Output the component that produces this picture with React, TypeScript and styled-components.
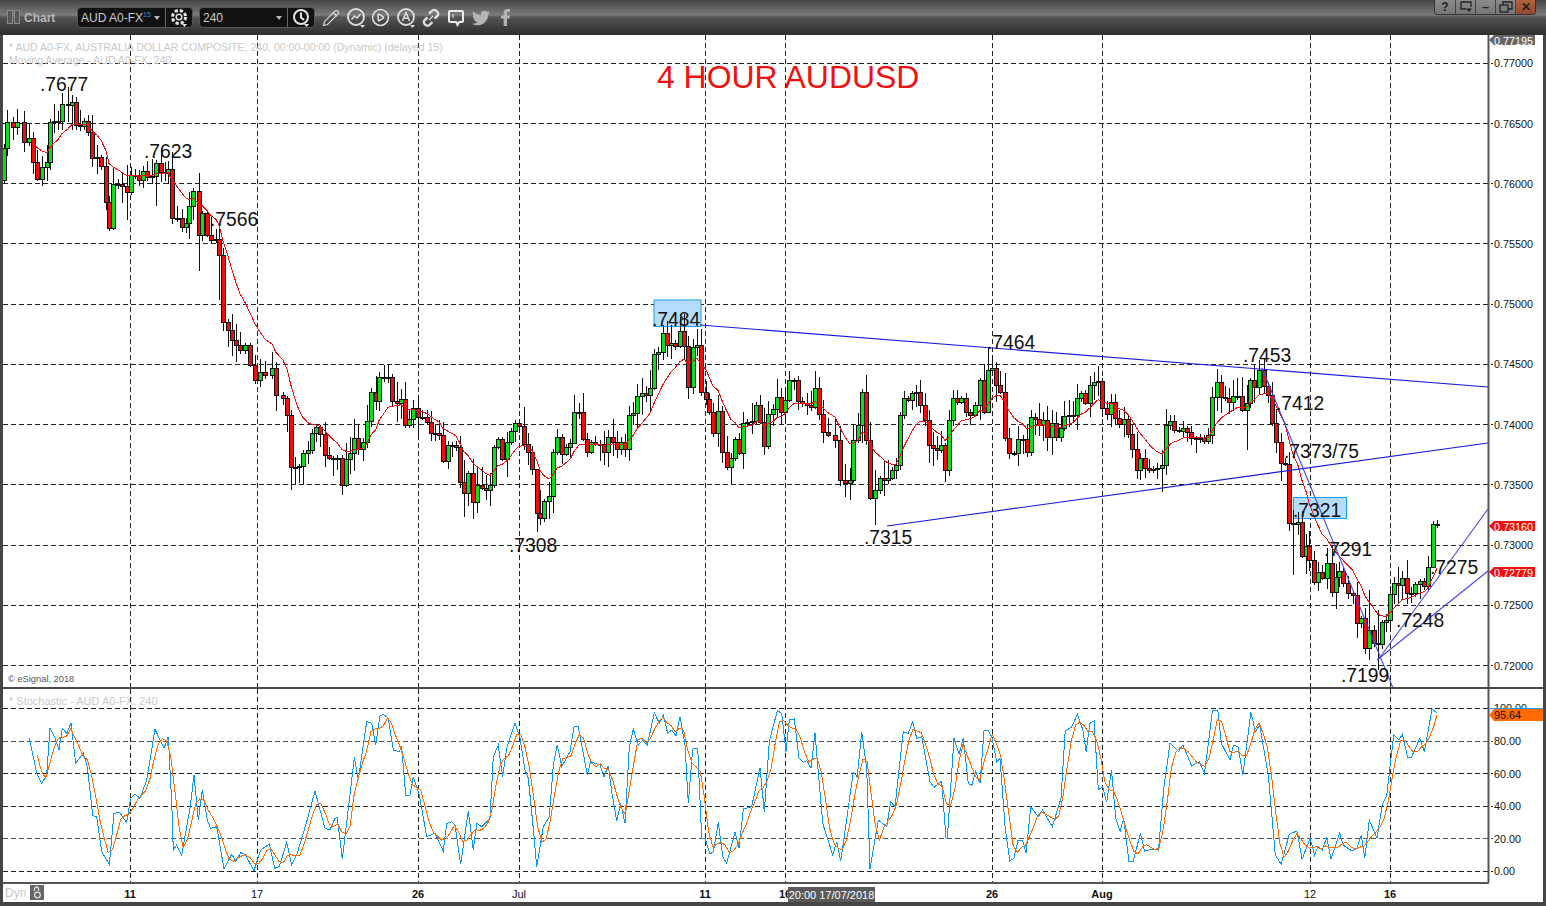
import React from "react";
import styled, { createGlobalStyle } from "styled-components";
import { Pencil, CirclePlay } from "lucide-react";
import { FaTwitter, FaFacebookF } from "react-icons/fa";

const Global = createGlobalStyle`
  html, body { margin: 0; padding: 0; background: #444; overflow: hidden; }
  * { box-sizing: border-box; }
`;

const Frame = styled.div`
  width: 1546px; height: 906px; display: flex; flex-direction: column;
  background: #454545; font-family: "Liberation Sans", Arial, sans-serif;
  padding: 0 3px 4px 3px;
`;
const TitleBar = styled.header`
  height: 35px; margin: 0 -3px; flex: none; display: flex; align-items: flex-start;
  padding-left: 7px; color: #ddd;
  background: linear-gradient(#444 0, #5a5a5a 6px, #7c7c7c 15px, #555 17px, #454545 24px, #2e2e2e 35px);
`;
const PanelGlyph = styled.span`
  width: 6px; height: 14px; margin: 10px 1px 0 0; border: 1px solid #8a8a8a; background: #555;
`;
const ChartTitle = styled.span`
  font-size: 12px; font-weight: 700; color: #b5b5b5; margin: 11px 21px 0 3px; width: 32px;
`;
const ControlGroup = styled.div`
  display: flex; height: 21px; margin: 7px 6px 0 0; background: #111; border: 1px solid #555; border-radius: 4px;
`;
const Picker = styled.div`
  width: 88px; display: flex; align-items: center; justify-content: space-between;
  padding: 0 5px 0 3px; font-size: 12px; color: #ccc; border-right: 1px solid #666;
`;
const Sup = styled.sup`
  font-size: 7px; color: #2d8ee0; line-height: 0; margin-left: 0;
`;
const Caret = styled.span`
  width: 0; height: 0; border: 3px solid transparent; border-top: 4px solid #bbb; margin-top: 4px;
`;
const GroupButton = styled.div`
  width: 26px; display: flex; align-items: center; justify-content: center; color: #eee;
`;
const IconRow = styled.div`
  display: flex; margin: 7px 0 0 -3px;
`;
const IconCell = styled.div<{ $dim?: boolean }>`
  width: 25px; height: 21px; display: flex; align-items: center; justify-content: center;
  color: ${(p) => (p.$dim ? "#b4b4b4" : "#dcdcdc")};
`;
const WindowButtons = styled.div`
  margin: 0 10px 0 auto; display: flex; height: 15px;
  border: 1px solid #333; border-top: 0; border-radius: 0 0 4px 4px; overflow: hidden;
`;
const WindowButton = styled.div<{ $close?: boolean }>`
  width: 20px; display: flex; align-items: center; justify-content: center;
  font-size: 12px; font-weight: 700; color: #222; border-left: 1px solid #444;
  background: ${(p) => (p.$close ? "linear-gradient(#b0623c,#93492c)" : "linear-gradient(#8b8b8b,#757575)")};
  &:first-child { border-left: 0; }
`;
const Plot = styled.main`
  flex: 1; display: flex; flex-direction: column; background: #fff;
`;
const Pane = styled.svg`
  display: block; flex: none; width: 1540px;
`;
const PaneDivider = styled.div`
  height: 2px; flex: none; background: #4a4a4a;
`;
const TimeAxis = styled.footer`
  position: relative; height: 20px; flex: none; display: flex; align-items: center; gap: 4px;
  padding-left: 2px;
  &::before { content: ""; position: absolute; left: 0; top: 0; width: 1486px; height: 2px; background: #555; }
`;
const DynTag = styled.span`
  font-size: 12px; color: #c8c8c8; margin-top: 2px;
`;
const LockBadge = styled.span`
  width: 14px; height: 15px; margin-top: 1px; background: #666; color: #ddd; display: flex; align-items: center; justify-content: center;
`;
const TimeTick = styled.span<{ $bold?: boolean }>`
  position: absolute; top: 6px; transform: translateX(-50%); font-size: 11px; color: #111;
  font-weight: ${(p) => (p.$bold ? 700 : 400)};
`;
const TimeCursor = styled.span`
  position: absolute; left: 785px; top: 5px; width: 87px; height: 15px; background: #5a5a5a; color: #fff;
  font-size: 11px; display: flex; align-items: center; justify-content: center;
`;

const PriceNote = styled.text`
  font: 19.3px "Liberation Sans", Arial, sans-serif; fill: #111;
`;
const Headline = styled.text`
  font: 31.9px "Liberation Sans", Arial, sans-serif; fill: #f01010;
`;
const Legend = styled.text<{ $size?: number }>`
  font: ${(p) => p.$size ?? 10.55}px "Liberation Sans", Arial, sans-serif; fill: #c9c9c9;
`;
const Credit = styled.text`
  font: 9.3px "Liberation Sans", Arial, sans-serif; fill: #555;
`;
const AxisLabel = styled.text`
  font: 10.8px "Liberation Sans", Arial, sans-serif; fill: #111; dominant-baseline: central;
`;
const FlagLabel = styled.text`
  font: 10.8px "Liberation Sans", Arial, sans-serif; fill: #fff; dominant-baseline: central;
`;

const pts = (s: string, ox = 0, sx = 1, oy = 0, sy = 1) =>
  s.trim().split(";").filter(Boolean).map((p) => {
    const [a, b] = p.split(",").map(Number);
    return [ox + a / sx, oy + b / sy] as [number, number];
  });

const closes = pts(`0,180;4,148;7,122;13,127;17,122;24,142;29,138;33,162;37,179;42,167;47,162;50,122;54,121;58,121;62,104;68,105;72,102;76,125;80,126;84,121;88,132;92,158;97,157;101,166;106,202;109,228;113,184;118,184;122,186;127,192;131,175;135,175;139,180;143,171;147,177;152,176;156,163;161,172;165,173;168,169;172,218;177,218;182,227;186,223;189,206;193,191;199,235;202,213;207,235;211,240;216,239;219,255;223,322;228,330;232,340;236,345;240,350;245,345;250,365;255,380;260,372;265,375;272,368;276,395;283,398;287,415;291,467;295,467;299,466;303,453;308,450;312,433;316,427;320,434;325,455;329,458;333,459;337,458;342,485;346,459;350,453;354,438;358,449;363,442;367,421;371,392;376,401;379,377;384,377;388,377;392,401;397,403;401,399;405,425;409,419;413,408;418,417;422,417;427,422;431,433;435,433;439,435;443,461;448,445;452,445;456,447;460,482;464,493;468,473;473,502;477,485;482,488;486,490;490,485;494,447;498,439;502,459;507,442;511,431;515,423;519,426;524,444;528,452;532,469;537,513;540,518;544,501;549,496;553,452;557,437;562,454;566,447;570,443;574,412;579,412;583,439;587,452;591,442;595,444;600,444;604,452;608,437;613,442;617,449;621,442;625,449;629,415;633,413;637,396;642,393;646,395;650,388;654,354;658,352;663,333;667,345;671,343;675,346;680,331;684,346;688,387;693,347;697,345;701,392;706,399;709,412;713,433;718,411;722,452;727,467;731,458;735,439;739,453;743,423;747,422;752,421;756,405;760,422;764,446;768,414;773,409;777,397;781,412;785,400;789,380;794,380;798,401;802,403;807,405;811,407;815,388;819,414;823,432;828,435;835,440;840,480;845,483;850,480;853,440;858,425;862,392;866,440;870,498;875,490;880,478;884,480;888,478;892,470;896,465;900,415;904,398;908,400;912,393;916,392;920,405;925,420;929,445;933,448;937,450;941,445;945,470;949,420;953,398;957,402;961,398;966,412;970,415;975,405;980,380;984,412;988,370;992,368;996,385;1000,392;1005,438;1009,453;1014,453;1018,439;1023,439;1027,452;1031,417;1035,419;1039,425;1043,420;1047,437;1052,423;1056,437;1061,428;1064,416;1069,415;1073,415;1077,398;1081,393;1085,403;1090,385;1094,382;1098,381;1102,408;1107,414;1111,402;1115,418;1119,424;1124,419;1128,434;1132,449;1137,470;1140,458;1145,468;1149,470;1153,469;1157,468;1162,465;1166,425;1170,421;1174,430;1179,431;1183,428;1187,432;1191,438;1196,438;1200,438;1204,441;1208,435;1212,397;1217,382;1221,397;1225,398;1229,402;1233,396;1237,396;1242,410;1247,403;1250,380;1254,387;1259,370;1264,386;1268,395;1272,423;1276,442;1281,463;1285,464;1289,523;1293,524;1298,522;1302,556;1306,546;1309,560;1314,582;1318,572;1322,578;1327,563;1332,592;1336,577;1339,571;1343,583;1348,593;1353,595;1357,623;1361,618;1365,648;1369,630;1374,643;1378,644;1382,622;1386,620;1390,594;1394,583;1398,585;1402,578;1407,593;1411,593;1415,584;1420,581;1424,586;1428,567;1433,524;1437,525`);

const wickOverride: Record<number, [number, number]> = {
  62: [93, 130], 72: [95, 130], 127: [165, 220], 156: [160, 206], 199: [173, 271], 219: [226, 300],
  291: [410, 490], 342: [455, 495], 433: [420, 470], 464: [460, 517], 537: [480, 532], 540: [490, 525],
  574: [395, 440], 663: [325, 360], 866: [375, 445], 875: [470, 525], 988: [348, 400], 1247: [385, 450],
  1162: [450, 492], 1259: [360, 395], 1293: [510, 575], 1369: [590, 660], 1378: [610, 670], 1433: [521, 530],
};

let seed = 7;
const rnd = () => { seed = (seed * 16807) % 2147483647; return seed / 2147483647; };

const bars = closes.map(([x, c], i) => {
  const o = i ? closes[i - 1][1] : c + 10;
  const top = Math.min(o, c), bot = Math.max(o, c);
  const ov = wickOverride[x];
  const hi = ov ? ov[0] : top - 2 - Math.pow(rnd(), 1.6) * 17;
  const lo = ov ? ov[1] : bot + 2 + Math.pow(rnd(), 1.6) * 17;
  return { x, o, c, top, bot, hi, lo };
});

const ma: [number, number][] = [];
{
  const alpha = 2 / 12;
  let value = closes.slice(1, 8).reduce((a, b) => a + b[1], 0) / 7;
  closes.forEach(([x, c], i) => {
    if (i < 7) return;
    value = value + alpha * (c - value);
    ma.push([x, value]);
  });
}

const stochBlue: [number, number][] = [
  ...pts(`88,128;110,235;125,265;140,240;150,100;165,130;177,165;187,100;200,115;213,85;227,205;250,175;262,215;278,362;290,365;305,470;328,508;342,355;358,352;380,382;392,310;405,297;420,310;440,255;465,103;480,135;492,160;505,125;515,320;520,465;530,450;545,480;570,340;582,240;595,375;607,285;622,375;632,400;650,395;672,522;695,478;707,498;722,473;735,478;762,527;782,465;808,447;824,520;838,515;860,442;875,510;890,480;920,380;945,288;975,400;990,405;1005,370;1012,368;1027,492;1050,300;1063,187;1075,255;1100,80;1115,85;1127,150;1140,62;1150,58;1165,70;1180,165;1197,170;1205,155;1217,300;1230,300;1240,245;1258,300;1280,425;1305,415;1330,468;1340,385;1355,380;1365,390;1382,508;1405,348;1420,465;1430,385;1445,395;1470,370;1480,185;1495,150`, 0, 3, 695, 3),
  ...pts(`0,190;8,245;20,160;45,85;60,130;75,225;85,250;100,400;110,515;130,395;148,365;160,210;172,150;185,215;210,170;222,95;235,95;262,240;272,200;300,210;312,245;325,212;335,290;350,378;362,325;375,385;388,155;400,103;415,150;428,135;442,150;463,53;478,85;490,60;503,115;515,105;528,122;540,65;555,150;565,325;578,162;593,160;605,430;615,430;630,477;640,470;655,382;668,485;680,505;705,412;717,460;730,342;755,335;780,218;793,350;808,140;832,47;845,55;858,170;868,75;883,72;897,190;910,202;920,197;933,220;945,115;968,385;998,480;1010,440;1022,498;1060,232;1072,245;1085,110;1100,220;1110,522;1135,375;1160,395;1172,320;1185,335;1210,110;1225,115;1238,80;1250,130;1265,125;1290,260;1302,277;1325,258;1338,430;1342,430;1362,130;1377,178;1390,130;1405,265;1415,272;1427,228;1440,265;1452,107;1465,107;1475,125;1490,200`, 500, 3, 695, 3),
  ...pts(`0,190;15,400;28,498;40,490;52,435;65,435;75,475;88,335;110,365;122,345;150,395;175,310;187,108;205,97;222,58;238,105;247,170;258,85;270,78;282,285;295,275;306,322;320,225;332,370;345,408;355,370;370,500;382,500;403,415;415,468;440,462;455,465;470,280;488,145;512,170;525,150;550,213;572,200;587,235;610,47;625,45;635,145;660,195;670,150;683,155;697,240;720,52;733,110;745,90;770,240;790,480;807,508;830,418;852,408;867,492;890,430;903,480;912,455;925,465;938,428;950,492;975,415;985,450;1010,468;1025,460;1037,420;1047,490;1060,375;1082,430;1097,330;1110,300;1130,120;1145,135;1155,118;1170,188;1180,188;1205,130;1218,170;1240,42;1255,55`, 1000, 2.87, 695, 3),
];

const sampleAt = (x: number) => {
  for (let i = 1; i < stochBlue.length; i++) {
    const [x0, y0] = stochBlue[i - 1], [x1, y1] = stochBlue[i];
    if (x <= x1) return y0 + ((y1 - y0) * (x - x0)) / Math.max(x1 - x0, 0.01);
  }
  return stochBlue[stochBlue.length - 1][1];
};
const stochOrange: [number, number][] = [];
for (let x = 37.3; x <= 1435; x += 4.17) {
  stochOrange.push([x, (sampleAt(x) + sampleAt(x - 4.17) + sampleAt(x - 8.34)) / 3]);
}
stochOrange.push([1437, 715]);

const line = (a: [number, number][]) => a.map(([x, y]) => `${x.toFixed(1)},${y.toFixed(1)}`).join(" ");

const vGrid = [130, 257, 418, 519, 705, 785, 992, 1102, 1310, 1390];
const prices: [number, number, string][] = [
  [63, 63, "0.77000"], [123, 124, "0.76500"], [183, 184, "0.76000"], [243, 244, "0.75500"], [304, 304, "0.75000"],
  [364, 364, "0.74500"], [424, 425, "0.74000"], [484, 485, "0.73500"], [545, 545, "0.73000"], [605, 605, "0.72500"], [665, 666, "0.72000"],
];
const notes: [string, number, number][] = [
  [".7677", 40, 91], [".7623", 144, 158], [".7566", 210, 226], [".7484", 652, 326], [".7464", 987, 349],
  [".7453", 1243, 362], [".7412", 1276, 410], [".7373/75", 1284, 458], [".7321", 1293, 517], [".7291", 1324, 556],
  [".7275", 1430, 574], [".7248", 1396, 627], [".7199", 1341, 682], [".7315", 864, 544], [".7308", 509, 552],
];
const trendLines = [
  [700, 325, 1488, 387], [887, 526, 1488, 443], [1262, 368, 1393, 688], [1378, 660, 1488, 509], [1377, 660, 1488, 571],
];
const stochGrid: [number, number, string, string][] = [
  [708, 708, "100.00", "#222"], [741, 741, "80.00", "#555"], [773, 774, "60.00", "#222"], [806, 806, "40.00", "#222"], [838, 839, "20.00", "#555"], [871, 871, "0.00", "#222"],
];
const ticks: [string, number, boolean][] = [
  ["11", 130, true], ["17", 257, false], ["26", 418, true], ["Jul", 519, false], ["11", 705, true], ["16", 785, true],
  ["26", 992, true], ["Aug", 1102, true], ["12", 1310, false], ["16", 1390, true],
];

const Flag = ({ y, text, fill }: { y: number; text: string; fill: string }) => (
  <g>
    <polygon points={`1489,${y} 1494,${y - 5} 1535,${y - 5} 1535,${y + 5} 1494,${y + 5}`} fill={fill} />
    <FlagLabel x={1494} y={y + 0.5}>{text}</FlagLabel>
  </g>
);

const GearIcon = () => (
  <svg width="20" height="20" viewBox="0 0 20 20" fill="none" stroke="#e4e4e4">
    <circle cx="10" cy="9" r="6.500" strokeWidth="3" strokeDasharray="3.200 1.900" />
    <circle cx="10" cy="9" r="2.800" strokeWidth="1.500" />
    <path d="M13 16h5l-2.500 3z" fill="#e4e4e4" stroke="none" />
  </svg>
);
const ClockIcon = () => (
  <svg width="20" height="20" viewBox="0 0 20 20" fill="none" stroke="#e4e4e4" strokeWidth="2">
    <circle cx="10" cy="9" r="7" />
    <path d="M10 4.500V9.500l3 2.500" />
    <path d="M13 16h5l-2.500 3z" fill="#e4e4e4" stroke="none" />
  </svg>
);
const ChartCircleIcon = () => (
  <svg width="22" height="22" viewBox="0 0 22 22" fill="none" stroke="#dcdcdc" strokeWidth="2">
    <circle cx="11" cy="10" r="8" />
    <path d="M6.500 12.500 9.500 9l2.500 2 3.500-4" strokeWidth="1.600" />
    <path d="M15 18h5l-2.500 3z" fill="#dcdcdc" stroke="none" />
  </svg>
);
const LetterCircleIcon = () => (
  <svg width="22" height="22" viewBox="0 0 22 22" fill="none" stroke="#dcdcdc" strokeWidth="1.800">
    <circle cx="11" cy="10" r="8" />
    <path d="M7.500 14 11 5.500 14.500 14M8.700 11.200h4.600" strokeWidth="1.500" />
    <path d="M15 18h5l-2.500 3z" fill="#dcdcdc" stroke="none" />
  </svg>
);
const LinkIcon = () => (
  <svg width="20" height="20" viewBox="0 0 20 20" fill="none" stroke="#dcdcdc" strokeWidth="2.400">
    <path d="M8 5.500 11 3a2.800 2.800 0 0 1 4.500 0l.8.800a2.800 2.800 0 0 1 0 4.200L13.500 10.500" />
    <path d="M6.500 9.500 3.800 12a2.800 2.800 0 0 0 0 4.200l.6.600a2.800 2.800 0 0 0 4.200 0L11.500 14" />
    <path d="M8 12l4-4" strokeWidth="1.200" />
  </svg>
);
const SpeechIcon = () => (
  <svg width="18" height="18" viewBox="0 0 18 18" fill="none" stroke="#ececec" strokeWidth="2">
    <path d="M3 2h12a1 1 0 0 1 1 1v9a1 1 0 0 1-1 1h-3l-1.500 3-1.500-3H3a1 1 0 0 1-1-1V3a1 1 0 0 1 1-1z" />
    <path d="M6 5v4" strokeWidth="1" />
  </svg>
);
const LockIcon = () => (
  <svg width="10" height="13" viewBox="0 0 10 13" fill="none" stroke="#ddd" strokeWidth="1.300">
    <path d="M2.500 5V3a2 2 0 0 1 4 0v2" />
    <circle cx="5.500" cy="9" r="2.800" />
  </svg>
);
const RestoreIcon = () => (
  <svg width="14" height="12" viewBox="0 0 14 12" fill="none" stroke="#222" strokeWidth="1.300">
    <rect x="1" y="4" width="8" height="7" />
    <path d="M4 4V1h9v7h-4" />
  </svg>
);
const ScreenMenuIcon = () => (
  <svg width="14" height="12" viewBox="0 0 14 12" fill="none" stroke="#222" strokeWidth="1.300">
    <path d="M7 8H2V1h10v5" />
    <path d="M7 7.500h6L10 11z" fill="#222" stroke="none" />
  </svg>
);

export default function App() {
  return (
    <Frame>
      <Global />
      <TitleBar>
        <PanelGlyph />
        <PanelGlyph />
        <ChartTitle>Chart</ChartTitle>
        <ControlGroup>
          <Picker>
            <span>AUD A0-FX<Sup>15</Sup></span>
            <Caret />
          </Picker>
          <GroupButton><GearIcon /></GroupButton>
        </ControlGroup>
        <ControlGroup>
          <Picker>
            <span>240</span>
            <Caret />
          </Picker>
          <GroupButton><ClockIcon /></GroupButton>
        </ControlGroup>
        <IconRow>
          <IconCell><Pencil size={18} strokeWidth={1.6} /></IconCell>
          <IconCell><ChartCircleIcon /></IconCell>
          <IconCell><CirclePlay size={19} strokeWidth={2} /></IconCell>
          <IconCell><LetterCircleIcon /></IconCell>
          <IconCell><LinkIcon /></IconCell>
          <IconCell><SpeechIcon /></IconCell>
          <IconCell $dim><FaTwitter size={18} /></IconCell>
          <IconCell $dim><FaFacebookF size={17} /></IconCell>
        </IconRow>
        <WindowButtons>
          <WindowButton>?</WindowButton>
          <WindowButton><ScreenMenuIcon /></WindowButton>
          <WindowButton>–</WindowButton>
          <WindowButton><RestoreIcon /></WindowButton>
          <WindowButton $close>✕</WindowButton>
        </WindowButtons>
      </TitleBar>
      <Plot>
        <Pane width={1540} height={652} viewBox="3 35 1540 652">
          {prices.map(([y, labelY, t]) => (
            <g key={y}>
              <line x1={3} x2={1493} y1={y + 0.5} y2={y + 0.5} stroke="#222" strokeDasharray="5 3" />
              <AxisLabel x={1494} y={labelY}>{t}</AxisLabel>
            </g>
          ))}
          {vGrid.map((x) => (
            <line key={x} x1={x + 0.5} x2={x + 0.5} y1={35} y2={687} stroke="#222" strokeDasharray="5 3" />
          ))}
          <rect x={654} y={300} width={47} height={26.500} fill="#b6dcfb" stroke="#1e9bf0" />
          <rect x={1293.500} y={497.500} width={53} height={21} fill="#b6dcfb" stroke="#1e9bf0" />
          <g shapeRendering="crispEdges">
            {bars.map((b) => {
              const h = b.bot - b.top;
              return (
                <g key={b.x}>
                  <line x1={b.x + 0.5} x2={b.x + 0.5} y1={b.hi} y2={b.lo} stroke="#111" />
                  {h < 1.5 ? (
                    <rect x={b.x - 2} y={b.top - 0.500} width={5} height={2} fill="#111" />
                  ) : (
                    <rect x={b.x - 1.500} y={b.top} width={4} height={h} fill={b.c < b.o ? "#07e01a" : "#f20d0d"} stroke="#111" />
                  )}
                </g>
              );
            })}
          </g>
          <polyline points={line(ma)} fill="none" stroke="#f01010" strokeWidth={1} shapeRendering="crispEdges" />
          {trendLines.map(([a, b, c, d], i) => (
            <line key={i} x1={a} y1={b} x2={c} y2={d} stroke={i < 2 ? "#1a1ae0" : "#4545e8"} strokeWidth={1.100} />
          ))}
          {notes.map(([t, x, y]) => (
            <PriceNote key={t} x={x} y={y}>{t}</PriceNote>
          ))}
          <Headline x={657} y={88}>4 HOUR AUDUSD</Headline>
          <Legend x={9} y={51}>* AUD A0-FX, AUSTRALIA DOLLAR COMPOSITE, 240, 00:00-00:00 (Dynamic) (delayed 15)</Legend>
          <Legend x={9} y={64}>Moving Average - AUD A0-FX, 240</Legend>
          <Credit x={8} y={682}>© eSignal, 2018</Credit>
          <line x1={1488.500} x2={1488.500} y1={35} y2={687} stroke="#555" strokeWidth={2} />
          <Flag y={40} text="0.77195" fill="#666" />
          <Flag y={526} text="0.73160" fill="#f01010" />
          <Flag y={572} text="0.72779" fill="#f01010" />
        </Pane>
        <PaneDivider />
        <Pane width={1540} height={193} viewBox="3 689 1540 193">
          <Legend $size={11} x={9} y={705}>* Stochastic - AUD A0-FX, 240</Legend>
          {stochGrid.map(([y, labelY, t, c]) => (
            <g key={y}>
              <line x1={3} x2={1493} y1={y + 0.5} y2={y + 0.5} stroke={c} strokeDasharray="5 3" />
              <AxisLabel x={1494} y={labelY}>{t}</AxisLabel>
            </g>
          ))}
          {vGrid.map((x) => (
            <line key={x} x1={x + 0.5} x2={x + 0.5} y1={689} y2={882} stroke="#222" strokeDasharray="5 3" />
          ))}
          <polyline points={line(stochBlue)} fill="none" stroke="#0a96ff" strokeWidth={1} shapeRendering="crispEdges" />
          <polyline points={line(stochOrange)} fill="none" stroke="#ff6a00" strokeWidth={1} shapeRendering="crispEdges" />
          <line x1={1488.500} x2={1488.500} y1={689} y2={882} stroke="#555" strokeWidth={2} />
          <polygon points="1489,715 1494,709 1543,709 1543,721 1494,721" fill="#ff6a00" />
          <line x1={1490} x2={1543} y1={708.500} y2={708.500} stroke="#1e9bf0" />
          <AxisLabel x={1494} y={715}>95.64</AxisLabel>
        </Pane>
        <TimeAxis>
          <DynTag>Dyn</DynTag>
          <LockBadge><LockIcon /></LockBadge>
          {ticks.map(([t, x, bold]) => (
            <TimeTick key={`${t}${x}`} $bold={bold} style={{ left: x - 3 }}>{t}</TimeTick>
          ))}
          <TimeCursor>20:00 17/07/2018</TimeCursor>
        </TimeAxis>
      </Plot>
    </Frame>
  );
}
